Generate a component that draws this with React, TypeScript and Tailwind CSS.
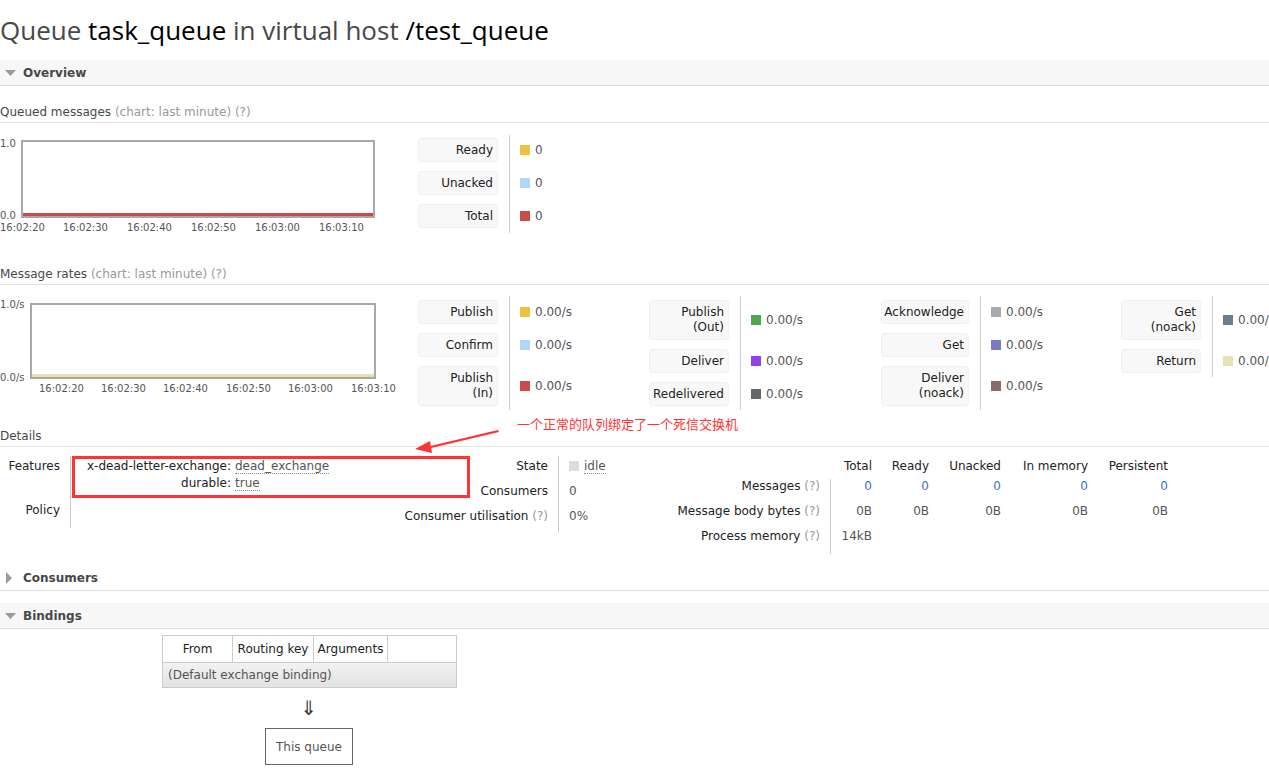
import React from "react";

type Row = { label: string[]; color: string; value: string };

function Legend({
  rows,
  labelW,
  width,
  pt,
  pb,
}: {
  rows: Row[];
  labelW: "w-[80px]" | "w-[88px]";
  width: string;
  pt: string;
  pb: string;
}) {
  return (
    <div className={`flex shrink-0 items-start ${width}`}>
      <div className={`flex flex-col gap-[9px] pr-[11px] ${pt} ${pb}`}>
        {rows.map((r, i) => (
          <div
            key={i}
            className={`${labelW} ${r.label.length > 1 ? "h-[40px]" : "h-[24px]"} flex flex-col justify-center rounded-[3px] border border-[#f0f0f0] bg-[#f8f8f8] pr-[4px] text-right leading-[15px] text-[#222]`}
          >
            {r.label.map((l, j) => (
              <div key={j}>{l}</div>
            ))}
          </div>
        ))}
      </div>
      <div className={`flex flex-col gap-[9px] border-l border-[#ccc] pl-[10px] ${pt} ${pb}`}>
        {rows.map((r, i) => (
          <div
            key={i}
            className={`${r.label.length > 1 ? "h-[40px]" : "h-[24px]"} flex items-center gap-[5px] whitespace-nowrap text-[#555]`}
          >
            <span className="inline-block h-[10px] w-[10px]" style={{ background: r.color }} />
            <span>{r.value}</span>
          </div>
        ))}
      </div>
    </div>
  );
}

function SectionBar({ title, open, shaded }: { title: string; open: boolean; shaded: boolean }) {
  return (
    <div
      className={`flex h-[26px] items-center border-b border-[#ddd] ${shaded ? "bg-[#f7f7f7]" : "bg-white"}`}
    >
      <div className="flex w-[23px] items-center justify-center">
        {open ? (
          <svg width="12" height="8" viewBox="0 0 12 8" className="ml-[-2px]">
            <polygon points="0,1 11,1 5.5,7" fill="#9a9a9a" />
          </svg>
        ) : (
          <svg width="8" height="12" viewBox="0 0 8 12" className="ml-[-6px]">
            <polygon points="1,0 7,6 1,12" fill="#9a9a9a" />
          </svg>
        )}
      </div>
      <span className="text-[12px] font-bold text-[#484848]">{title}</span>
    </div>
  );
}

function SubHeader({ title, mt }: { title: string; mt: string }) {
  return (
    <div className={`${mt} border-b border-[#e2e2e2] pb-[3px] leading-[14px] text-[#484848]`}>
      {title} <span className="text-[#999]">(chart: last minute) (?)</span>
    </div>
  );
}

export default function App() {
  const font = { fontFamily: '"DejaVu Sans", Verdana, sans-serif' };
  const times = ["16:02:20", "16:02:30", "16:02:40", "16:02:50", "16:03:00", "16:03:10"];
  const t1 = [0, 63, 127, 191, 255, 319];
  const t2 = [39, 101, 163, 226, 288, 351];

  return (
    <div
      className="relative h-[779px] w-full overflow-hidden bg-white text-[12px] text-[#484848]"
      style={font}
    >
      <h1
        className="pt-[14px] pb-[14px] text-[26px] leading-[32px] font-normal whitespace-nowrap text-[#484848]"
        style={{ fontFamily: '"Open Sans", "Noto Sans", sans-serif' }}
      >
        Queue <span className="text-black">task_queue</span> in virtual host{" "}
        <span className="text-black">/test_queue</span>
      </h1>

      <SectionBar title="Overview" open shaded />

      <SubHeader title="Queued messages" mt="mt-[19px]" />
      <div className="flex h-[130px]">
        <svg width="418" height="130" className="shrink-0" style={font}>
          <rect x="22" y="18" width="352" height="76" fill="white" stroke="#a8a8a8" strokeWidth="2" />
          <line x1="23" y1="91.5" x2="373" y2="91.5" stroke="#cb4b4b" strokeWidth="3" />
          <text x="0" y="24" fontSize="10" fill="#555">1.0</text>
          <text x="0" y="96" fontSize="10" fill="#555">0.0</text>
          {times.map((t, i) => (
            <text key={t} x={t1[i]} y="108" fontSize="10" fill="#555">
              {t}
            </text>
          ))}
        </svg>
        <div className="mt-[12px]">
          <Legend
            width="w-[231px]"
            labelW="w-[80px]"
            pt="pt-[3px]"
            pb="pb-[5px]"
            rows={[
              { label: ["Ready"], color: "#edc240", value: "0" },
              { label: ["Unacked"], color: "#afd8f8", value: "0" },
              { label: ["Total"], color: "#cb4b4b", value: "0" },
            ]}
          />
        </div>
      </div>

      <SubHeader title="Message rates" mt="mt-[14px]" />
      <div className="flex h-[140px]">
        <svg width="418" height="130" className="shrink-0" style={font}>
          <rect x="31" y="19" width="344" height="74" fill="white" stroke="#a8a8a8" strokeWidth="2" />
          <line x1="32" y1="90.5" x2="374" y2="90.5" stroke="#e8e2b0" strokeWidth="3" />
          <text x="0" y="23" fontSize="10" fill="#555">1.0/s</text>
          <text x="0" y="96" fontSize="10" fill="#555">0.0/s</text>
          {times.map((t, i) => (
            <text key={t} x={t2[i]} y="107" fontSize="10" fill="#555">
              {t}
            </text>
          ))}
        </svg>
        <div className="mt-[11px] flex">
          <Legend
            width="w-[231px]"
            labelW="w-[80px]"
            pt="pt-[4px]"
            pb="pb-[4px]"
            rows={[
              { label: ["Publish"], color: "#edc240", value: "0.00/s" },
              { label: ["Confirm"], color: "#afd8f8", value: "0.00/s" },
              { label: ["Publish", "(In)"], color: "#cb4b4b", value: "0.00/s" },
            ]}
          />
          <Legend
            width="w-[232px]"
            labelW="w-[80px]"
            pt="pt-[4px]"
            pb="pb-[4px]"
            rows={[
              { label: ["Publish", "(Out)"], color: "#4da74d", value: "0.00/s" },
              { label: ["Deliver"], color: "#9440ed", value: "0.00/s" },
              { label: ["Redelivered"], color: "#666666", value: "0.00/s" },
            ]}
          />
          <Legend
            width="w-[240px]"
            labelW="w-[88px]"
            pt="pt-[4px]"
            pb="pb-[4px]"
            rows={[
              { label: ["Acknowledge"], color: "#aaaaaa", value: "0.00/s" },
              { label: ["Get"], color: "#7c79c3", value: "0.00/s" },
              { label: ["Deliver", "(noack)"], color: "#8d6a6a", value: "0.00/s" },
            ]}
          />
          <Legend
            width="w-[240px]"
            labelW="w-[80px]"
            pt="pt-[4px]"
            pb="pb-[4px]"
            rows={[
              { label: ["Get", "(noack)"], color: "#6a7d88", value: "0.00/s" },
              { label: ["Return"], color: "#e6e3b0", value: "0.00/s" },
            ]}
          />
        </div>
      </div>

      <div className="mt-[4px] border-b border-[#e2e2e2] pb-[3px] leading-[14px] text-[#484848]">Details</div>

      <div className="flex pt-[9px] text-[#222]">
        {/* Features / Policy */}
        <div className="flex w-[400px] shrink-0 items-start">
          <div className="flex w-[71px] flex-col border-r border-[#ccc] pr-[10px] text-right">
            <div className="h-[46px] pt-[2px] leading-[17px]">Features</div>
            <div className="h-[26px] pt-[1px] leading-[14px]">Policy</div>
          </div>
          <div className="grid grid-cols-[160px_auto] gap-x-[4px] pt-[2px] leading-[17px]">
            <div className="text-right">x-dead-letter-exchange:</div>
            <div>
              <span className="border-b border-dotted border-[#888] text-[#555]">dead_exchange</span>
            </div>
            <div className="text-right">durable:</div>
            <div>
              <span className="border-b border-dotted border-[#888] text-[#555]">true</span>
            </div>
          </div>
        </div>

        {/* State */}
        <div className="flex shrink-0 items-start">
          <div className="flex w-[159px] flex-col border-r border-[#ccc] pr-[10px] pb-[2px] text-right whitespace-nowrap">
            <div className="h-[25px] pt-[3px] leading-[14px]">State</div>
            <div className="h-[25px] pt-[3px] leading-[14px]">Consumers</div>
            <div className="h-[25px] pt-[3px] leading-[14px]">
              Consumer utilisation <span className="text-[#999]">(?)</span>
            </div>
          </div>
          <div className="flex w-[81px] flex-col pl-[10px] text-[#555]">
            <div className="flex h-[25px] items-start gap-[5px] pt-[3px] leading-[14px]">
              <span className="mt-[2px] inline-block h-[10px] w-[10px] bg-[#ddd]" />
              <span className="border-b border-dotted border-[#888]">idle</span>
            </div>
            <div className="h-[25px] pt-[3px] leading-[14px]">0</div>
            <div className="h-[25px] pt-[3px] leading-[14px]">0%</div>
          </div>
        </div>

        {/* Messages table */}
        <div className="grid shrink-0 grid-cols-[191px_41px_57px_72px_87px_80px] leading-[14px]">
          <div className="h-[23px]" />
          {["Total", "Ready", "Unacked", "In memory", "Persistent"].map((h) => (
            <div key={h} className="h-[23px] pt-[3px] text-right whitespace-nowrap">
              {h}
            </div>
          ))}
          <div className="h-[25px] border-r border-[#ccc] pr-[10px] text-right">
            Messages <span className="text-[#999]">(?)</span>
          </div>
          {[0, 1, 2, 3, 4].map((i) => (
            <div key={i} className="h-[25px] text-right text-[#3f72b0]">
              0
            </div>
          ))}
          <div className="h-[25px] border-r border-[#ccc] pr-[10px] text-right whitespace-nowrap">
            Message body bytes <span className="text-[#999]">(?)</span>
          </div>
          {[0, 1, 2, 3, 4].map((i) => (
            <div key={i} className="h-[25px] text-right text-[#555]">
              0B
            </div>
          ))}
          <div className="h-[25px] border-r border-[#ccc] pr-[10px] text-right whitespace-nowrap">
            Process memory <span className="text-[#999]">(?)</span>
          </div>
          <div className="h-[25px] text-right text-[#555]">14kB</div>
          <div className="col-span-4" />
        </div>
      </div>

      <div className="mt-[11px]">
        <SectionBar title="Consumers" open={false} shaded={false} />
      </div>
      <div className="mt-[12px]">
        <SectionBar title="Bindings" open shaded />
      </div>

      <div className="ml-[162px] mt-[6px] w-[295px] border border-[#ccc]">
        <div className="grid h-[26px] grid-cols-[70px_81px_74px_68px] text-[#222]">
          <div className="flex items-center justify-center border-r border-[#ccc]">From</div>
          <div className="flex items-center justify-center border-r border-[#ccc] whitespace-nowrap">Routing key</div>
          <div className="flex items-center justify-center border-r border-[#ccc]">Arguments</div>
          <div />
        </div>
        <div className="flex h-[25px] items-center border-t border-[#ccc] bg-gradient-to-b from-[#f2f2f2] to-[#e2e2e2] pl-[5px] text-[#555]">
          (Default exchange binding)
        </div>
      </div>

      <div className="ml-[265px] flex w-[88px] flex-col items-center">
        <div className="flex h-[40px] items-center text-[20px] leading-none text-[#333]">⇓</div>
        <div className="flex h-[37px] w-[88px] items-center justify-center border border-[#666] text-[#555]">
          This queue
        </div>
      </div>

      {/* annotation overlay */}
      <div className="absolute top-[456px] left-[72px] h-[42px] w-[398px] border-[3px] border-[#f33]" />
      <svg className="absolute top-[420px] left-[405px]" width="110" height="40">
        <polygon points="93,10 94,12 22,29 21,27" fill="#f33" />
        <polygon points="10,29 25,21 27,33" fill="#f33" />
      </svg>
      <div
        className="absolute top-[415px] left-[517px] text-[13px] leading-[18px] whitespace-nowrap text-[#f33]"
        style={{ fontFamily: '"Noto Sans CJK SC", sans-serif' }}
      >
        一个正常的队列绑定了一个死信交换机
      </div>
    </div>
  );
}
